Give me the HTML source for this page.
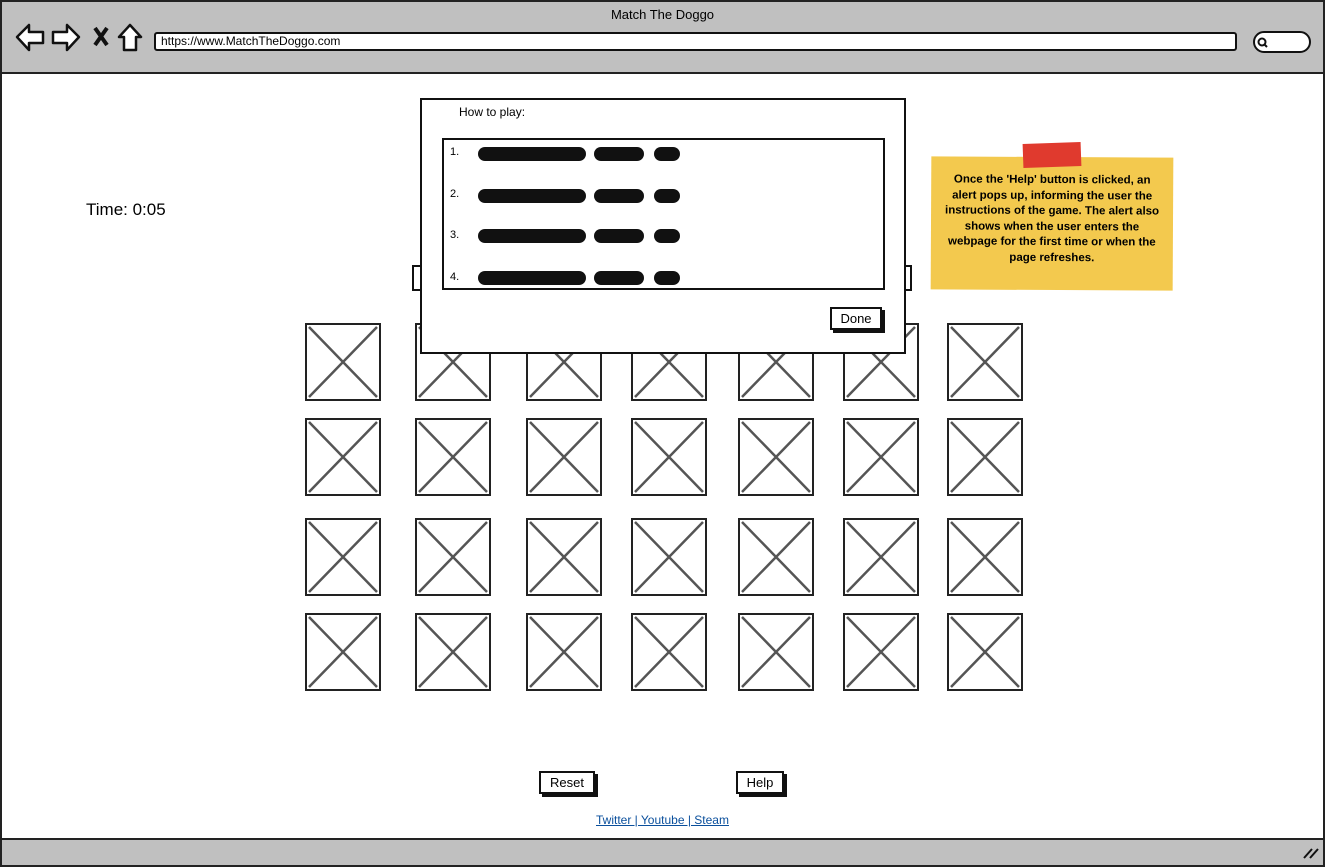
<!DOCTYPE html><html><head><style>
*{margin:0;padding:0;box-sizing:border-box}
body{width:1325px;height:867px;position:relative;background:#fff;font-family:"Liberation Sans",sans-serif;overflow:hidden}
.a{position:absolute}
.cell{position:absolute;width:76px;height:78px;border:2px solid #222;background:#fff}
.btn{position:absolute;border:2px solid #111;background:#fff;box-shadow:3px 3px 0 #111;font-size:13px;text-align:center;line-height:20px}
.sq{position:absolute;left:34px;height:14px;background:#111;border-radius:7px}
</style></head><body>
<div class="a" style="left:0;top:0;width:1325px;height:74px;background:#c0c0c0;border:2px solid #222"></div>
<div class="a" style="left:0;top:7px;width:1325px;text-align:center;font-size:13px">Match The Doggo</div>
<svg class="a" style="left:14px;top:22px" width="135" height="32">
<path d="M3 15 L15 3 V10 H29 V21 H15 V28 Z" fill="#fff" stroke="#111" stroke-width="2.5" stroke-linejoin="round"/>
<path d="M65 15 L53 3 V10 H39 V21 H53 V28 Z" fill="#fff" stroke="#111" stroke-width="2.5" stroke-linejoin="round"/>
<path d="M81 6 L93 23 M93 6 L81 23" stroke="#111" stroke-width="4"/>
<path d="M105 15 L116 3 L127 15 H122 V28 H110 V15 Z" fill="#fff" stroke="#111" stroke-width="2.5" stroke-linejoin="round"/>
</svg>
<div class="a" style="left:154px;top:32px;width:1083px;height:19px;background:#fff;border:2px solid #111;border-radius:3px;font-size:12px;padding-left:5px;line-height:15px">https://www.MatchTheDoggo.com</div>
<div class="a" style="left:1253px;top:31px;width:58px;height:22px;background:#fff;border:2px solid #111;border-radius:11px"></div>
<svg class="a" style="left:1256px;top:36px" width="14" height="14"><circle cx="6" cy="6" r="3.5" fill="none" stroke="#111" stroke-width="2"/><path d="M8.5 8.5 L11 11" stroke="#111" stroke-width="2"/></svg>
<div class="a" style="left:0;top:72px;width:1325px;height:795px;border:2px solid #222;border-top:none"></div>
<div class="a" style="left:0;top:838px;width:1325px;height:29px;background:#c0c0c0;border:2px solid #222"></div>
<svg class="a" style="left:1302px;top:846px" width="18" height="14"><path d="M2 12 L10 3 M8 12 L16 3" stroke="#111" stroke-width="2"/></svg>
<div class="a" style="left:86px;top:200px;font-size:17px">Time: 0:05</div>
<div class="a" style="left:412px;top:265px;width:500px;height:26px;border:2px solid #111"></div>
<div id="g"></div>
<script>
var xs=[305,415,526,631,738,843,947],ys=[323,418,518,613],h='';
ys.forEach(function(y){xs.forEach(function(x){h+='<div class="cell" style="left:'+x+'px;top:'+y+'px"><svg width="72" height="74"><path d="M2 2 L70 72 M70 2 L2 72" stroke="#555" stroke-width="2.5"/></svg></div>'})});
document.getElementById('g').innerHTML=h;
</script>
<div class="a" style="left:420px;top:98px;width:486px;height:256px;background:#fff;border:2px solid #111">
<div class="a" style="left:37px;top:5px;font-size:12px">How to play:</div>
<div class="a" style="left:20px;top:38px;width:443px;height:152px;border:2px solid #111">
<div class="a" style="left:6px;top:6px;font-size:11px">1.</div><div class="sq" style="top:7px;width:108px"></div><div class="sq" style="left:150px;top:7px;width:50px"></div><div class="sq" style="left:210px;top:7px;width:26px"></div>
<div class="a" style="left:6px;top:48px;font-size:11px">2.</div><div class="sq" style="top:49px;width:108px"></div><div class="sq" style="left:150px;top:49px;width:50px"></div><div class="sq" style="left:210px;top:49px;width:26px"></div>
<div class="a" style="left:6px;top:89px;font-size:11px">3.</div><div class="sq" style="top:89px;width:108px"></div><div class="sq" style="left:150px;top:89px;width:50px"></div><div class="sq" style="left:210px;top:89px;width:26px"></div>
<div class="a" style="left:6px;top:131px;font-size:11px">4.</div><div class="sq" style="top:131px;width:108px"></div><div class="sq" style="left:150px;top:131px;width:50px"></div><div class="sq" style="left:210px;top:131px;width:26px"></div>
</div>
<div class="btn" style="left:408px;top:207px;width:52px;height:23px">Done</div>
</div>
<div class="a" style="left:931px;top:157px;width:242px;height:133px;background:#f3c94e;transform:rotate(0.3deg);font-size:11.5px;font-weight:bold;text-align:center;line-height:15.5px;padding:16px 12px 0">Once the 'Help' button is clicked, an alert pops up, informing the user the instructions of the game. The alert also shows when the user enters the webpage for the first time or when the page refreshes.</div>
<div class="a" style="left:1023px;top:143px;width:58px;height:24px;background:#e03a2e;transform:rotate(-2deg)"></div>
<div class="btn" style="left:539px;top:771px;width:56px;height:23px">Reset</div>
<div class="btn" style="left:736px;top:771px;width:48px;height:23px">Help</div>
<div class="a" style="left:0;top:813px;width:1325px;text-align:center;font-size:12px;color:#0a4f9c;text-decoration:underline">Twitter | Youtube | Steam</div>
</body></html>
